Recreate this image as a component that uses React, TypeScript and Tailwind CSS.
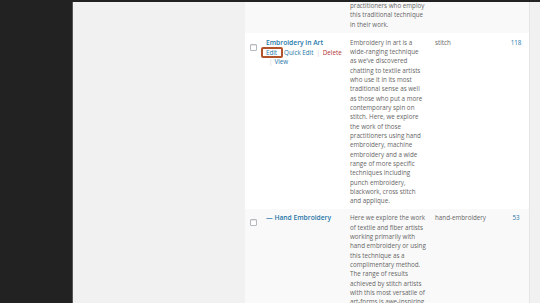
import React from "react";

const Lines = ({ lines }: { lines: string[] }) => (
  <div>
    {lines.map((l, i) => (
      <div key={i} className="whitespace-nowrap">
        {l}
      </div>
    ))}
  </div>
);

const Checkbox = () => (
  <div className="ml-[5px] mt-[6px] w-[7px] h-[7px] border border-[#b4b9be] rounded-[1px] bg-white shadow-[inset_0_1px_1px_rgba(0,0,0,0.1)]" />
);

const row2 = [
  "Embroidery in art is a",
  "wide-ranging technique",
  "as we\u2019ve discovered",
  "chatting to textile artists",
  "who use it in its most",
  "traditional sense as well",
  "as those who put a more",
  "contemporary spin on",
  "stitch. Here, we explore",
  "the work of those",
  "practitioners using hand",
  "embroidery, machine",
  "embroidery and a wide",
  "range of more specific",
  "techniques including",
  "punch embroidery,",
  "blackwork, cross stitch",
  "and applique.",
];

const row3 = [
  "Here we explore the work",
  "of textile and fiber artists",
  "working primarily with",
  "hand embroidery or using",
  "this technique as a",
  "complimentary method.",
  "The range of results",
  "achieved by stitch artists",
  "with this most versatile of",
  "art-forms is awe-inspiring.",
];

export default function App() {
  return (
    <div className="w-[540px] h-[303px] overflow-hidden bg-[#222] pt-[2px] flex font-['Open_Sans',sans-serif] text-[6.25px] leading-[9.35px] text-[#666]">
      <div className="w-[72px] shrink-0" />
      <div className="w-[173px] shrink-0 bg-[#f1f1f1] border-l border-[#555]" />
      <div className="w-[284px] shrink-0 bg-white flex flex-col">
        {/* partial row */}
        <div className="h-[31px] shrink-0 bg-[#f9f9f9] grid grid-cols-[16px_84px_85px_73px_26px] overflow-hidden">
          <div />
          <div />
          <div className="pl-[5px] -mt-[1px]">
            <Lines
              lines={[
                "practitioners who employ",
                "this traditional technique",
                "in their work.",
              ]}
            />
          </div>
          <div />
          <div />
        </div>

        {/* Embroidery in Art */}
        <div className="shrink-0 bg-white grid grid-cols-[16px_84px_85px_73px_26px] pt-[4.5px] pb-[3px]">
          <div>
            <Checkbox />
          </div>
          <div className="pl-[5px]">
            <div className="text-[6.7px] font-semibold text-[#1e76a8] whitespace-nowrap">
              Embroidery in Art
            </div>
            <div className="pt-[1px] whitespace-nowrap">
              <div className="flex items-center">
                <span className="relative text-[#1e76a8]">
                  Edit
                  <span className="absolute left-[-5px] right-[-6px] top-[-0.5px] bottom-[-0.5px] border-2 border-[#b3532b] rounded-[2px]" />
                </span>
                <span className="ml-[7px] text-[#1e76a8]">Quick Edit</span>
                <span className="mx-[3px] text-[#ccc]">|</span>
                <span className="text-[#b03030]">Delete</span>
              </div>
              <div className="flex items-center pl-[3px]">
                <span className="text-[#ccc] mr-[2px]">|</span>
                <span className="text-[#1e76a8]">View</span>
              </div>
            </div>
          </div>
          <div className="pl-[5px]">
            <Lines lines={row2} />
          </div>
          <div className="pl-[5px]">stitch</div>
          <div className="text-center text-[#1e76a8]">118</div>
        </div>

        {/* Hand Embroidery */}
        <div className="flex-1 bg-[#f9f9f9] grid grid-cols-[16px_84px_85px_73px_26px] pt-[4.5px] content-start">
          <div>
            <Checkbox />
          </div>
          <div className="pl-[5px]">
            <div className="text-[6.7px] font-semibold text-[#1e76a8] whitespace-nowrap">
              — Hand Embroidery
            </div>
          </div>
          <div className="pl-[5px]">
            <Lines lines={row3} />
          </div>
          <div className="pl-[5px]">hand-embroidery</div>
          <div className="text-center text-[#1e76a8]">53</div>
        </div>
      </div>
      <div className="flex-1 bg-[#f1f1f1] border-l border-[#e5e5e5]" />
    </div>
  );
}
